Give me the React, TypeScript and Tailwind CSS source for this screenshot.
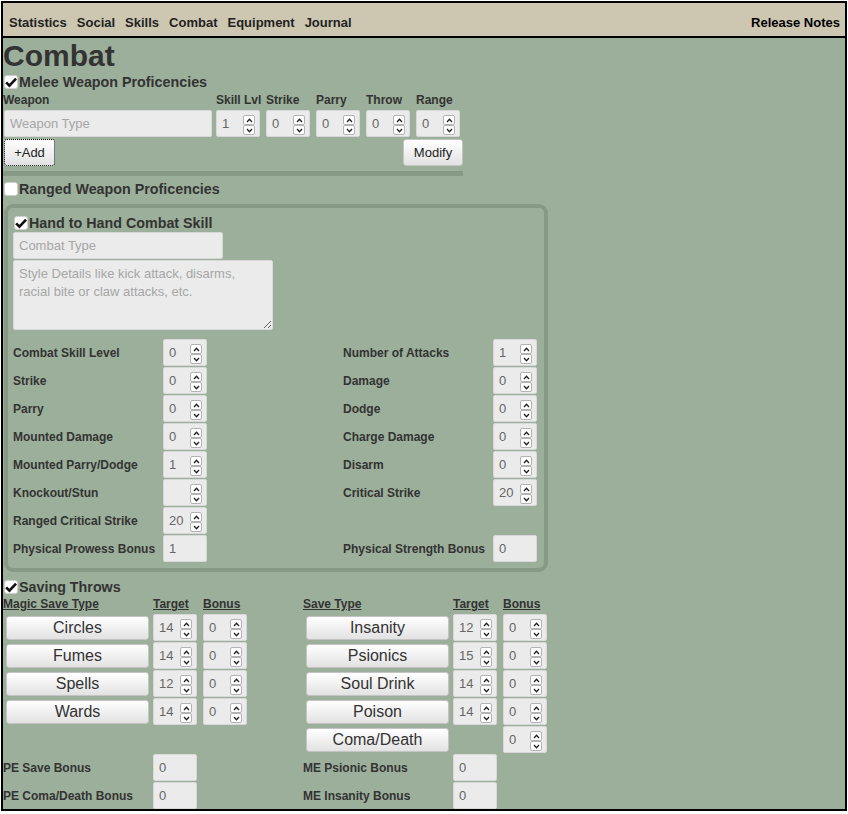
import React from 'react'

const navLinks = ['Statistics', 'Social', 'Skills', 'Combat', 'Equipment', 'Journal']

function Check({ on }: { on?: boolean }) {
  return (
    <span className="w-[14px] h-[14px] bg-white rounded-[3px] border border-[#cfcfcf] flex items-center justify-center shrink-0">
      {on && (
        <svg width="13" height="11" viewBox="0 0 13 11">
          <path d="M1.2 5.4 L4.8 8.9 L12 1.3" fill="none" stroke="#111" strokeWidth="2.9" />
        </svg>
      )}
    </span>
  )
}

function Title({ on, label }: { on?: boolean; label: string }) {
  return (
    <div className="flex items-center gap-[1px] h-[18px] pl-[1px] text-[14.3px] font-bold">
      <Check on={on} />
      <span className="relative top-[1px]">{label}</span>
    </div>
  )
}

function Spinner() {
  return (
    <span className="absolute right-[4px] top-[4px] flex flex-col">
      <span className="w-[12px] h-[10px] bg-white border border-[#b3b3b3] rounded-[2px] flex items-center justify-center">
        <svg width="7" height="5" viewBox="0 0 7 5">
          <path d="M1 4 L3.5 1.3 L6 4" fill="none" stroke="#222" strokeWidth="1.3" />
        </svg>
      </span>
      <span className="w-[12px] h-[10px] bg-white border border-[#b3b3b3] rounded-[2px] flex items-center justify-center">
        <svg width="7" height="5" viewBox="0 0 7 5">
          <path d="M1 1 L3.5 3.7 L6 1" fill="none" stroke="#222" strokeWidth="1.3" />
        </svg>
      </span>
    </span>
  )
}

function Num({ v, spin = true }: { v: string; spin?: boolean }) {
  return (
    <div className="relative w-[44px] h-[27px] bg-[#ebebeb] border border-[#d8d8d8] rounded-[2px] shrink-0">
      <input
        readOnly
        value={v}
        className="w-full h-full bg-transparent pl-[5px] text-[13px] font-normal text-[#666] outline-none"
      />
      {spin && <Spinner />}
    </div>
  )
}

function SaveBtn({ label }: { label: string }) {
  return (
    <button className="ml-[3px] w-[143px] h-[24px] rounded-[3px] border border-[#c4c4c4] bg-linear-to-b from-white to-[#e2e2e2] text-[16px] font-normal leading-[22px] text-[#333]">
      {label}
    </button>
  )
}

const leftStats: [string, string, boolean][] = [
  ['Combat Skill Level', '0', true],
  ['Strike', '0', true],
  ['Parry', '0', true],
  ['Mounted Damage', '0', true],
  ['Mounted Parry/Dodge', '1', true],
  ['Knockout/Stun', '', true],
  ['Ranged Critical Strike', '20', true],
  ['Physical Prowess Bonus', '1', false],
]

const rightStats: ([string, string, boolean] | null)[] = [
  ['Number of Attacks', '1', true],
  ['Damage', '0', true],
  ['Dodge', '0', true],
  ['Charge Damage', '0', true],
  ['Disarm', '0', true],
  ['Critical Strike', '20', true],
  null,
  ['Physical Strength Bonus', '0', false],
]

const magicSaves = [
  ['Circles', '14', '0'],
  ['Fumes', '14', '0'],
  ['Spells', '12', '0'],
  ['Wards', '14', '0'],
]

const otherSaves = [
  ['Insanity', '12', '0'],
  ['Psionics', '15', '0'],
  ['Soul Drink', '14', '0'],
  ['Poison', '14', '0'],
]

function StatRow({ item }: { item: [string, string, boolean] | null }) {
  if (!item) return <div className="h-[27px]" />
  const [label, v, spin] = item
  return (
    <div className="flex items-center h-[27px]">
      <span className="w-[150px] text-[12px] font-bold text-[#333]">{label}</span>
      <Num v={v} spin={spin} />
    </div>
  )
}

export default function App() {
  return (
    <div className="font-['Liberation_Sans',Arial,sans-serif] text-[#333]">
      <div className="m-[1px] h-[810px] border-2 border-black bg-[#9caf9a] overflow-hidden">
        {/* Nav */}
        <nav className="h-[35px] bg-[#cdc7b1] border-b-2 border-black flex items-center justify-between pt-[6px] pl-[6px] pr-[5px] text-[13px] font-bold text-[#222]">
          <div className="flex gap-[10px]">
            {navLinks.map((l) => (
              <span key={l}>{l}</span>
            ))}
          </div>
          <span className="text-black">Release Notes</span>
        </nav>

        <h1 className="mt-[1px] text-[30px] leading-[34px] font-bold">Combat</h1>

        {/* Melee */}
        <div className="w-[460px] pb-[5px] border-b-[5px] border-[#879a86]">
          <Title on label="Melee Weapon Proficencies" />
          <div className="flex gap-[6px] h-[19px] leading-[19px] text-[12px] font-bold whitespace-nowrap">
            <span className="w-[207px]">Weapon</span>
            <span className="w-[44px]">Skill Lvl</span>
            <span className="w-[44px]">Strike</span>
            <span className="w-[44px]">Parry</span>
            <span className="w-[44px]">Throw</span>
            <span className="w-[44px]">Range</span>
          </div>
          <div className="flex gap-[6px] pl-[1px]">
            <input
              readOnly
              placeholder="Weapon Type"
              className="w-[208px] mr-[-2px] h-[27px] bg-[#ebebeb] border border-[#d8d8d8] rounded-[2px] pl-[5px] text-[13px] placeholder:text-[#a6a6a6] outline-none"
            />
            <Num v="1" />
            <Num v="0" />
            <Num v="0" />
            <Num v="0" />
            <Num v="0" />
          </div>
          <div className="flex justify-between mt-[2px] pl-[1px]">
            <button className="w-[51px] h-[27px] rounded-[3px] border border-black border-dotted bg-linear-to-b from-white to-[#e2e2e2] text-[13px] text-[#222]">
              +Add
            </button>
            <button className="w-[60px] h-[27px] rounded-[3px] border border-[#c4c4c4] bg-linear-to-b from-white to-[#e2e2e2] text-[13px] text-[#222]">
              Modify
            </button>
          </div>
        </div>

        {/* Ranged */}
        <div className="mt-[4px]">
          <Title label="Ranged Weapon Proficencies" />
        </div>

        {/* Hand to hand */}
        <div className="mt-[6px] ml-[1px] w-[544px] border-4 border-[#879a86] rounded-[9px] pt-[6px] pb-[6px] pl-[5px]">
          <Title on label="Hand to Hand Combat Skill" />
          <input
            readOnly
            placeholder="Combat Type"
            className="block w-[210px] h-[27px] bg-[#ebebeb] border border-[#d8d8d8] rounded-[2px] pl-[5px] text-[13px] placeholder:text-[#a6a6a6] outline-none"
          />
          <textarea
            readOnly
            placeholder="Style Details like kick attack, disarms, racial bite or claw attacks, etc."
            className="block mt-[1px] w-[260px] h-[70px] bg-[#ebebeb] border border-[#d8d8d8] rounded-[2px] px-[5px] pt-[4px] text-[13px] leading-[18px] placeholder:text-[#a6a6a6] outline-none"
          />
          <div className="mt-[9px] grid grid-cols-[330px_200px] gap-y-[1px]">
            {leftStats.map((l, i) => (
              <React.Fragment key={i}>
                <StatRow item={l} />
                <StatRow item={rightStats[i]} />
              </React.Fragment>
            ))}
          </div>
        </div>

        {/* Saving throws */}
        <div className="mt-[6px]">
          <Title on label="Saving Throws" />
        </div>
        <div className="grid grid-cols-[150px_50px_50px_50px_150px_50px_50px] gap-y-[1px] text-[12px] font-bold">
          <span className="underline leading-[17px] h-[17px]">Magic Save Type</span>
          <span className="underline leading-[17px]">Target</span>
          <span className="underline leading-[17px]">Bonus</span>
          <span />
          <span className="underline leading-[17px]">Save Type</span>
          <span className="underline leading-[17px]">Target</span>
          <span className="underline leading-[17px]">Bonus</span>

          {otherSaves.map((o, i) => {
            const m = magicSaves[i]
            return (
              <React.Fragment key={i}>
                <div className="h-[27px] flex items-center">
                  <SaveBtn label={m[0]} />
                </div>
                <Num v={m[1]} />
                <Num v={m[2]} />
                <span />
                <div className="h-[27px] flex items-center">
                  <SaveBtn label={o[0]} />
                </div>
                <Num v={o[1]} />
                <Num v={o[2]} />
              </React.Fragment>
            )
          })}

          <span />
          <span />
          <span />
          <span />
          <div className="h-[27px] flex items-center">
            <SaveBtn label="Coma/Death" />
          </div>
          <span />
          <Num v="0" />

          <div className="h-[27px] flex items-center">PE Save Bonus</div>
          <Num v="0" spin={false} />
          <span />
          <span />
          <div className="h-[27px] flex items-center">ME Psionic Bonus</div>
          <Num v="0" spin={false} />
          <span />

          <div className="h-[27px] flex items-center">PE Coma/Death Bonus</div>
          <Num v="0" spin={false} />
          <span />
          <span />
          <div className="h-[27px] flex items-center">ME Insanity Bonus</div>
          <Num v="0" spin={false} />
          <span />
        </div>
      </div>
    </div>
  )
}
